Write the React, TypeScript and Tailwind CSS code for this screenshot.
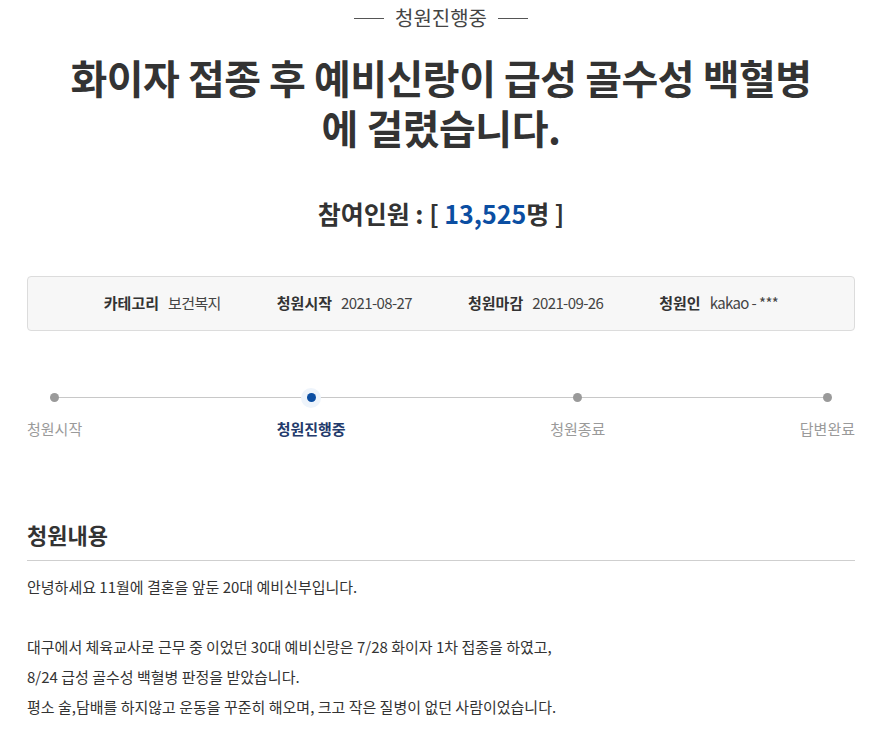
import React from 'react';

const font = { fontFamily: '"Noto Sans CJK KR", "Noto Sans", sans-serif' };

const steps = [
  { label: '청원시작', active: false },
  { label: '청원진행중', active: true },
  { label: '청원종료', active: false },
  { label: '답변완료', active: false },
];

const info = [
  { k: '카테고리', v: '보건복지' },
  { k: '청원시작', v: '2021-08-27' },
  { k: '청원마감', v: '2021-09-26' },
  { k: '청원인', v: 'kakao - ***' },
];

export default function App() {
  return (
    <div className="min-h-screen bg-white text-[#333]" style={font}>
      <div className="px-[27px] pt-[3px]">
        {/* status */}
        <div className="flex items-center justify-center gap-[11px]">
          <span className="w-[30px] h-px bg-[#555]" />
          <span className="text-[20px] leading-[30px] text-[#444]">청원진행중</span>
          <span className="w-[30px] h-px bg-[#555]" />
        </div>

        {/* title */}
        <h1 className="mt-[19px] text-center text-[40px] leading-[50px] font-bold text-[#333] tracking-[-0.5px]">
          화이자 접종 후 예비신랑이 급성 골수성 백혈병
          <br />에 걸렸습니다.
        </h1>

        {/* count */}
        <div className="mt-[44px] text-center text-[25px] leading-[34px] font-bold text-[#333]">
          참여인원 : [ <span className="text-[#0b4ea2]">13,525</span>명 ]
        </div>

        {/* info box */}
        <div className="mt-[46px] h-[55px] flex items-center justify-center gap-[56px] bg-[#f7f7f7] border border-[#dcdcdc] rounded-[4px] text-[15px]">
          {info.map((i) => (
            <div key={i.k} className="flex items-center gap-[9px]">
              <span className="font-bold text-[#333]">{i.k}</span>
              <span className="text-[#444] tracking-[-0.6px]">{i.v}</span>
            </div>
          ))}
        </div>

        {/* progress */}
        <div className="relative mt-[55px]">
          <div className="absolute left-[26px] right-[28px] top-[11px] h-px bg-[#c8c8c8]" />
          <div className="relative flex justify-between">
            {steps.map((s) => (
              <div key={s.label} className={s.active ? 'flex flex-col items-center mr-[10px]' : 'flex flex-col items-center'}>
                <div className="h-[23px] flex items-center justify-center">
                  {s.active ? (
                    <span className="w-[20px] h-[20px] rounded-full bg-[#eef4fb] flex items-center justify-center">
                      <span className="w-[9px] h-[9px] rounded-full bg-[#0b4ea2]" />
                    </span>
                  ) : (
                    <span className="w-[9px] h-[9px] rounded-full bg-[#9a9a9a]" />
                  )}
                </div>
                <span
                  className={
                    s.active
                      ? 'mt-[9px] text-[15px] leading-[22px] font-bold text-[#233a6b]'
                      : 'mt-[9px] text-[15px] leading-[22px] text-[#9a9a9a]'
                  }
                >
                  {s.label}
                </span>
              </div>
            ))}
          </div>
        </div>

        {/* content */}
        <h2 className="mt-[79px] text-[22px] leading-[30px] font-bold text-[#333] pb-[11px] border-b border-[#cfcfcf]">
          청원내용
        </h2>
        <div className="mt-[11px] text-[15px] leading-[30px] text-[#333]">
          <p>안녕하세요 11월에 결혼을 앞둔 20대 예비신부입니다.</p>
          <p>&nbsp;</p>
          <p>대구에서 체육교사로 근무 중 이었던 30대 예비신랑은 7/28 화이자 1차 접종을 하였고,</p>
          <p>8/24 급성 골수성 백혈병 판정을 받았습니다.</p>
          <p>평소 술,담배를 하지않고 운동을 꾸준히 해오며, 크고 작은 질병이 없던 사람이었습니다.</p>
        </div>
      </div>
    </div>
  );
}
